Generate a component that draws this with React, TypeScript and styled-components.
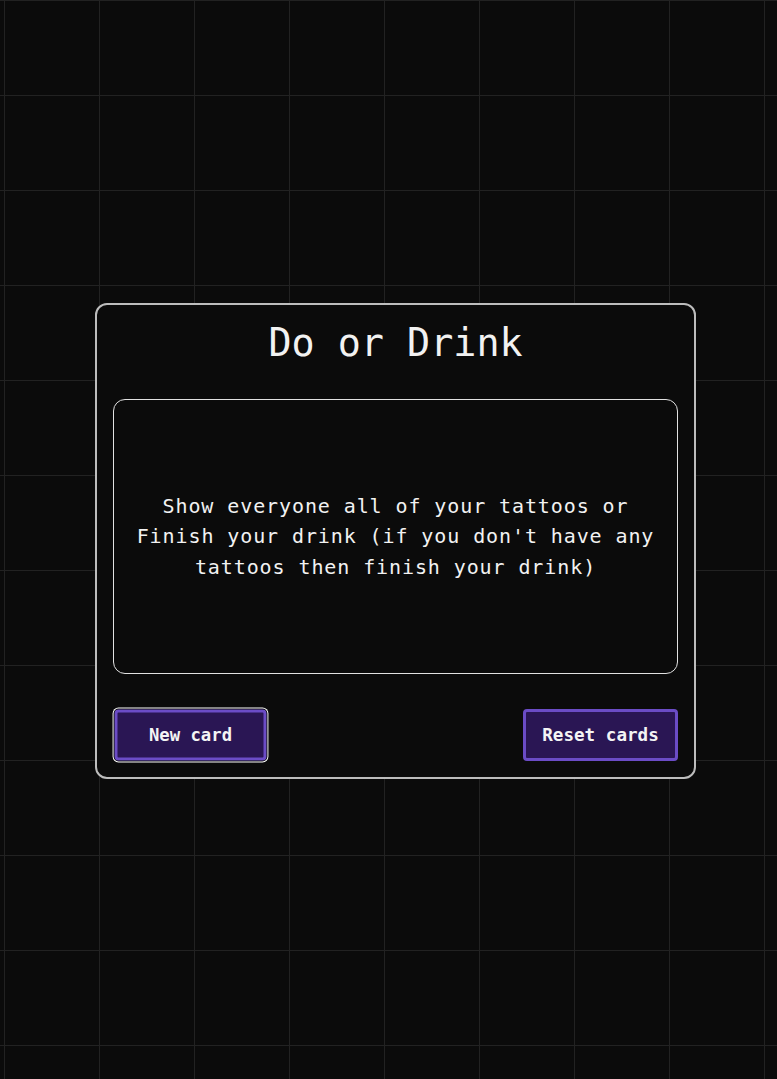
import React from "react";
import styled, { createGlobalStyle } from "styled-components";

const GlobalStyle = createGlobalStyle`
  html, body {
    margin: 0;
    padding: 0;
    min-height: 100%;
    background-color: #0b0b0b;
  }
  body {
    font-family: "DejaVu Sans Mono", "Liberation Mono", monospace;
    color: #f0f0f0;
  }
`;

const Page = styled.main`
  box-sizing: border-box;
  min-height: 100vh;
  display: flex;
  align-items: center;
  justify-content: center;
  padding: 3px 0 0 14px;
  background-color: #0b0b0b;
  background-image:
    linear-gradient(to right, #222222 1px, transparent 1px),
    linear-gradient(to bottom, #222222 1px, transparent 1px);
  background-size: 95px 95px;
  background-position: 4px 0;
`;

const Card = styled.section`
  box-sizing: border-box;
  width: 601px;
  border: 2px solid #bdbdbd;
  border-radius: 12px;
  padding: 16px;
  display: flex;
  flex-direction: column;
  background: #0b0b0b;
`;

const Title = styled.h1`
  margin: 0 0 34px;
  font-family: "DejaVu Sans Mono", monospace;
  font-weight: 400;
  font-size: 38.4px;
  line-height: 44px;
  text-align: center;
  color: #f2f2f2;
`;

const Prompt = styled.div`
  box-sizing: border-box;
  height: 275px;
  border: 1px solid #e2e2e2;
  border-radius: 12px;
  padding: 0 18px;
  display: flex;
  align-items: center;
  justify-content: center;
`;

const PromptText = styled.p`
  margin: 0;
  font-size: 20px;
  letter-spacing: 0.9px;
  line-height: 30.5px;
  text-align: center;
  color: #f2f2f2;
`;

const Actions = styled.div`
  margin-top: 35px;
  display: flex;
  justify-content: space-between;
  align-items: center;
`;

const Button = styled.button<{ $focused?: boolean }>`
  box-sizing: border-box;
  width: 155px;
  height: 52px;
  border: 3px solid #6b4cc6;
  border-radius: 4px;
  background: #2a1654;
  color: #f4f4f4;
  font-family: "DejaVu Sans Mono", monospace;
  font-weight: 700;
  font-size: 17.6px;
  cursor: pointer;
  transform: ${(p) => (p.$focused ? "scale(0.98)" : "none")};
  box-shadow: ${(p) =>
    p.$focused ? "0 0 0 1px #0b0b0b, 0 0 0 2px #ffffff" : "none"};
`;

export default function App() {
  return (
    <>
      <GlobalStyle />
      <Page>
        <Card>
          <Title>Do or Drink</Title>
          <Prompt>
            <PromptText>
              Show everyone all of your tattoos or Finish your drink (if you
              don't have any tattoos then finish your drink)
            </PromptText>
          </Prompt>
          <Actions>
            <Button $focused>New card</Button>
            <Button>Reset cards</Button>
          </Actions>
        </Card>
      </Page>
    </>
  );
}
